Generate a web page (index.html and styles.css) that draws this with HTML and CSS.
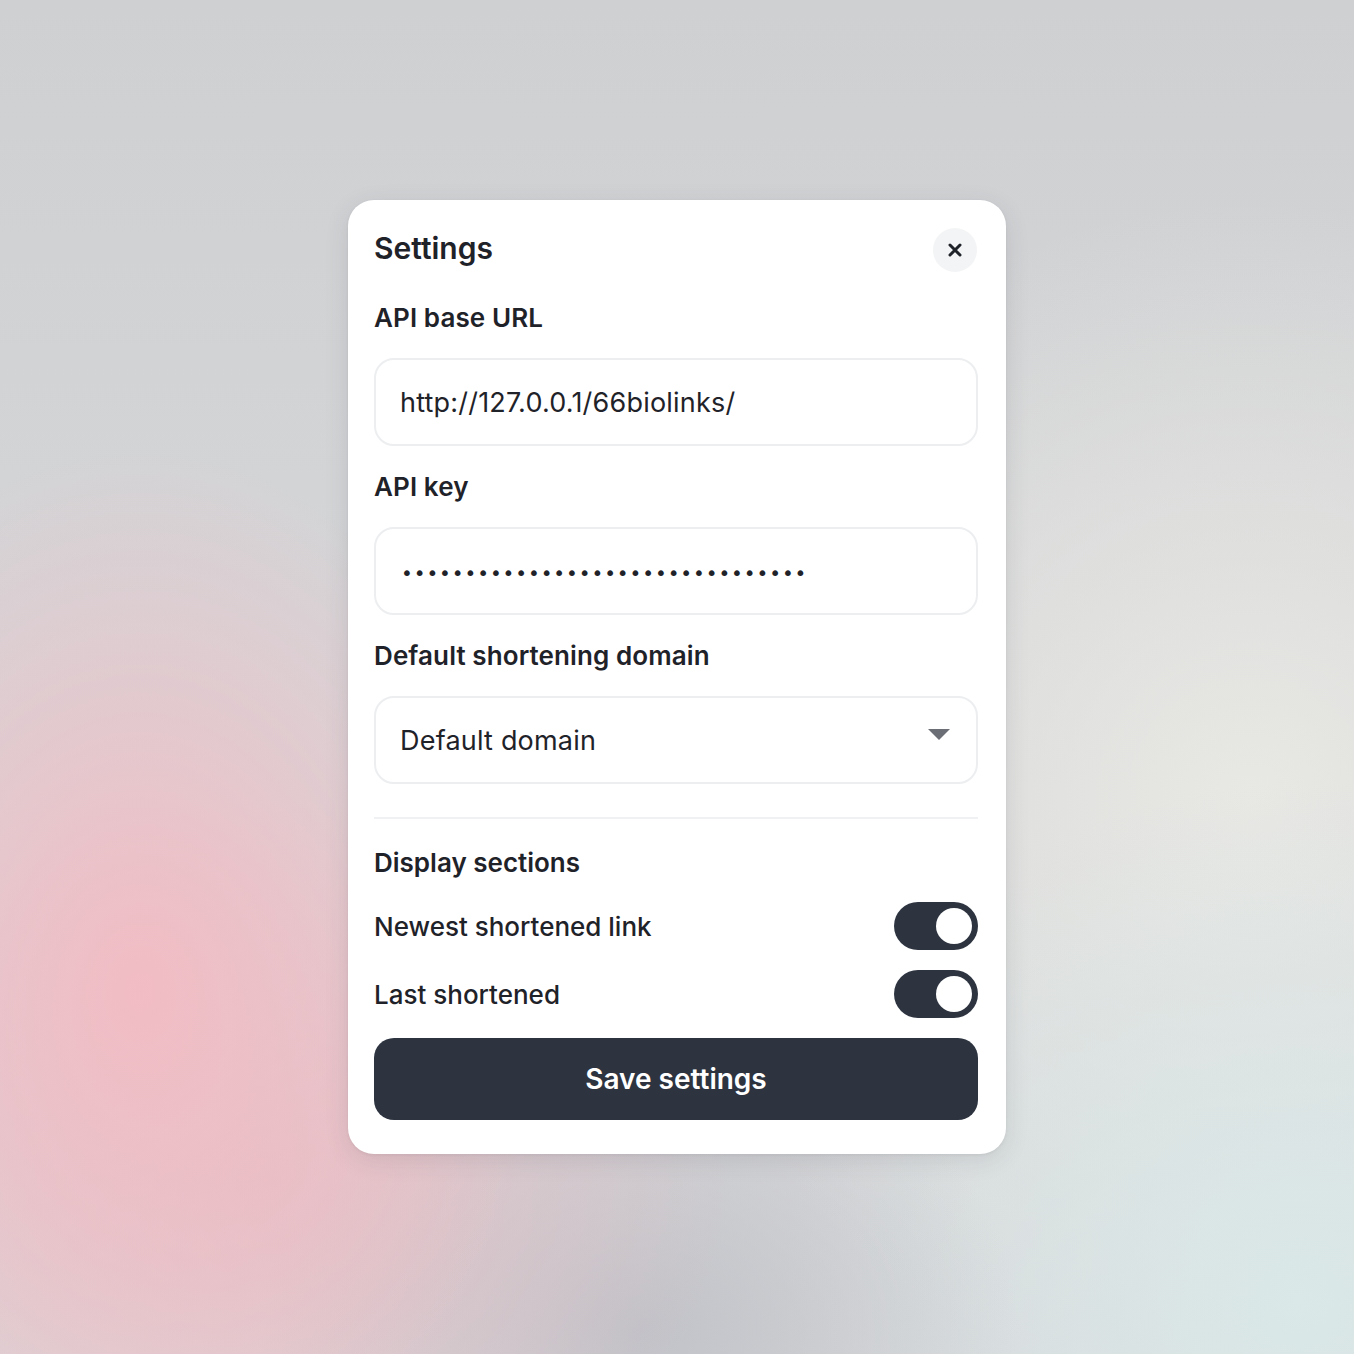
FILE: index.html
```html
<!DOCTYPE html>
<html lang="en">
<head>
<meta charset="utf-8">
<title>Settings</title>
<link rel="stylesheet" href="styles.css">
</head>
<body>
<div class="page">
  <div class="card">
    <div class="header">
      <h1 class="title">Settings</h1>
      <button class="close" aria-label="Close">
        <svg width="14" height="14" viewBox="0 0 14 14"><path d="M2 2L12 12M12 2L2 12" stroke="#1f2329" stroke-width="3" stroke-linecap="round"/></svg>
      </button>
    </div>
    <div class="field first">
      <div class="label">API base URL</div>
      <div class="input">http://127.0.0.1/66biolinks/</div>
    </div>
    <div class="field">
      <div class="label">API key</div>
      <div class="input dots">••••••••••••••••••••••••••••••••</div>
    </div>
    <div class="field">
      <div class="label">Default shortening domain</div>
      <div class="input select">
        <span>Default domain</span>
        <svg class="caret" width="22" height="12" viewBox="0 0 22 12"><path d="M0 0H22L11 11Z" fill="#6b6e75"/></svg>
      </div>
    </div>
    <div class="divider"></div>
    <div class="section-title">Display sections</div>
    <div class="toggle-row first-row">
      <span class="toggle-label">Newest shortened link</span>
      <span class="toggle"><span class="knob"></span></span>
    </div>
    <div class="toggle-row">
      <span class="toggle-label">Last shortened</span>
      <span class="toggle"><span class="knob"></span></span>
    </div>
    <button class="save">Save settings</button>
  </div>
</div>
</body>
</html>
```
FILE: styles.css
```css
* { box-sizing: border-box; }
html, body { margin: 0; padding: 0; }
body {
  font-family: Inter, "Noto Sans", "Liberation Sans", sans-serif;
  color: #1f2329;
  min-height: 1354px;
  background:
    radial-gradient(ellipse 400px 540px at 140px 990px, rgba(242,188,196,1), rgba(242,188,196,0) 100%),
    radial-gradient(ellipse 460px 380px at 270px 1180px, rgba(232,184,192,0.7), rgba(232,184,192,0) 100%),
    radial-gradient(ellipse 380px 300px at 640px 1330px, rgba(190,192,198,0.9), rgba(190,192,198,0) 100%),
    radial-gradient(ellipse 520px 520px at 1300px 1300px, rgba(218,232,232,1), rgba(218,232,232,0) 100%),
    radial-gradient(ellipse 600px 600px at 1250px 800px, rgba(232,232,228,1), rgba(232,232,228,0) 100%),
    linear-gradient(180deg, #cfd0d2 0%, #d4d5d7 45%, #d8d8da 100%);
}
.page {
  min-height: 1354px;
  display: flex;
  align-items: center;
  justify-content: center;
}
.card {
  width: 658px;
  background: #ffffff;
  border-radius: 26px;
  padding: 28px 28px 34px 26px;
  display: flex;
  flex-direction: column;
  box-shadow: 0 6px 24px rgba(60, 60, 70, 0.12), 0 1px 3px rgba(60,60,70,0.08);
}
.header {
  display: flex;
  align-items: center;
  justify-content: space-between;
  height: 44px;
}
.title {
  margin: 0;
  font-size: 30px;
  font-weight: 600;
  line-height: 36px;
  margin-top: -4px;
}
.close {
  width: 44px;
  height: 44px;
  margin-right: 1px;
  border-radius: 50%;
  border: none;
  background: #f3f4f5;
  display: flex;
  align-items: center;
  justify-content: center;
  padding: 0;
}
.field {
  display: flex;
  flex-direction: column;
  gap: 25px;
  margin-top: 26px;
}
.field.first { margin-top: 31px; }
.label {
  font-size: 26px;
  font-weight: 600;
  line-height: 30px;
  letter-spacing: 0.1px;
}
.input {
  height: 88px;
  border: 2px solid #eceef0;
  border-radius: 20px;
  padding: 0 24px;
  display: flex;
  align-items: center;
  font-size: 27px;
  letter-spacing: 0.2px;
  color: #1f2329;
}
.dots {
  font-family: "DejaVu Sans", sans-serif;
  font-size: 20px;
  letter-spacing: 0.9px;
  padding-top: 4px;
  padding-left: 25px;
}
.select {
  justify-content: space-between;
  padding-right: 26px;
}
.caret { margin-top: -10px; }
.divider {
  height: 2px;
  background: #f0f1f3;
  margin-top: 33px;
}
.section-title {
  font-size: 26px;
  font-weight: 600;
  line-height: 30px;
  margin-top: 29px;
}
.toggle-row {
  display: flex;
  align-items: center;
  justify-content: space-between;
  height: 48px;
  margin-top: 20px;
}
.toggle-row.first-row { margin-top: 24px; }
.toggle-label {
  font-size: 26px;
  font-weight: 500;
}
.toggle {
  width: 84px;
  height: 48px;
  border-radius: 24px;
  background: #2d3440;
  display: flex;
  align-items: center;
  justify-content: flex-end;
  padding: 0 6px;
}
.knob {
  width: 36px;
  height: 36px;
  border-radius: 50%;
  background: #ffffff;
}
.save {
  margin-top: 20px;
  height: 82px;
  border: none;
  border-radius: 20px;
  background: #2d3440;
  color: #ffffff;
  font-family: Inter, "Noto Sans", "Liberation Sans", sans-serif;
  font-size: 28px;
  font-weight: 600;
}
```
